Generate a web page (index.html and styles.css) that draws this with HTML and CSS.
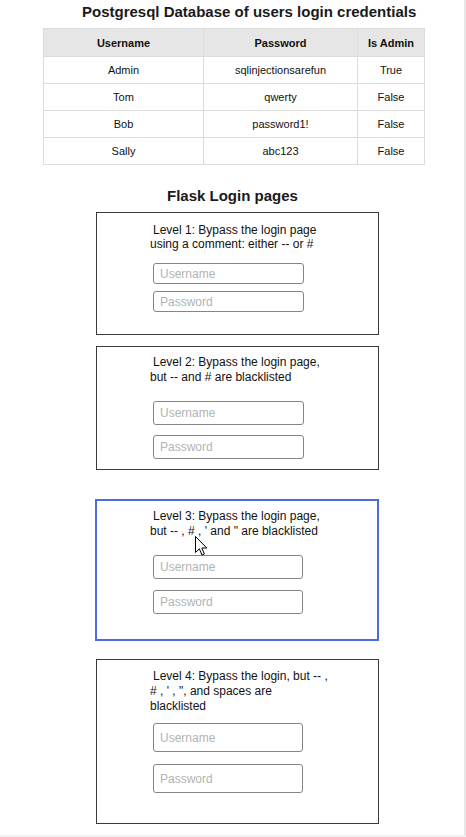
FILE: index.html
```
<!DOCTYPE html>
<html>
<head>
<meta charset="utf-8">
<title>SQL injection levels</title>
<link rel="stylesheet" href="styles.css">
</head>
<body>
<div class="page">
  <h1 class="title">Postgresql Database of users login credentials</h1>
  <table class="creds">
    <thead>
      <tr><th class="c-user">Username</th><th class="c-pass">Password</th><th class="c-admin">Is Admin</th></tr>
    </thead>
    <tbody>
      <tr><td>Admin</td><td>sqlinjectionsarefun</td><td>True</td></tr>
      <tr><td>Tom</td><td>qwerty</td><td>False</td></tr>
      <tr><td>Bob</td><td>password1!</td><td>False</td></tr>
      <tr><td>Sally</td><td>abc123</td><td>False</td></tr>
    </tbody>
  </table>

  <h2 class="subtitle">Flask Login pages</h2>

  <div class="levels">
    <div class="level level-1">
      <p class="prompt">Level 1: Bypass the login page<br>using a comment: either -- or #</p>
      <div class="fields">
        <input class="field" type="text" placeholder="Username">
        <input class="field" type="password" placeholder="Password">
      </div>
    </div>

    <div class="level level-2">
      <p class="prompt">Level 2: Bypass the login page,<br>but -- and # are blacklisted</p>
      <div class="fields">
        <input class="field" type="text" placeholder="Username">
        <input class="field" type="password" placeholder="Password">
      </div>
    </div>

    <div class="level level-3">
      <p class="prompt">Level 3: Bypass the login page,<br>but -- , # , ' and " are blacklisted</p>
      <div class="fields">
        <input class="field" type="text" placeholder="Username">
        <input class="field" type="password" placeholder="Password">
      </div>
      <svg class="cursor" width="13" height="20" viewBox="0 0 13 20">
        <path d="M0.5 0.5 L0.5 16.5 L4.3 12.8 L7 19 L9.4 18 L6.8 12 L11.8 12 Z" fill="#fff" stroke="#000" stroke-width="1" stroke-linejoin="miter"/>
      </svg>
    </div>

    <div class="level level-4">
      <p class="prompt">Level 4: Bypass the login, but -- ,<br># , ' , ", and spaces are<br>blacklisted</p>
      <div class="fields">
        <input class="field" type="text" placeholder="Username">
        <input class="field" type="password" placeholder="Password">
      </div>
    </div>
  </div>
</div>
</body>
</html>
```
FILE: styles.css
```
html {
  background: #f0f0f0;
}
body {
  margin: 0;
  font-family: "Liberation Sans", Arial, sans-serif;
  color: #111;
}
.page {
  width: 464px;
  height: 835px;
  background: #fff;
  border-right: 2px solid #e6e6e6;
  box-sizing: content-box;
  overflow: hidden;
}
.title {
  margin: 0;
  padding: 3px 0 0 82px;
  font-size: 15px;
  line-height: 18px;
  font-weight: bold;
  color: #1a1a1a;
}
.creds {
  margin: 7px 0 0 43px;
  border-collapse: collapse;
  font-size: 11px;
  color: #111;
}
.creds th,
.creds td {
  border: 1px solid #dcdcdc;
  text-align: center;
  padding: 0;
}
.creds th {
  background: #e6e6e6;
  height: 27px;
  font-weight: bold;
}
.creds td {
  height: 26px;
}
.c-user { width: 159px; }
.c-pass { width: 153px; }
.c-admin { width: 66px; }

.subtitle {
  margin: 22px 0 0 0;
  padding-left: 167px;
  font-size: 15px;
  line-height: 18px;
  font-weight: bold;
  color: #1a1a1a;
}
.levels {
  display: flex;
  flex-direction: column;
  padding-left: 96px;
  margin-top: 7px;
}
.level {
  position: relative;
  box-sizing: border-box;
  width: 283px;
  border: 1px solid #3a3a3a;
  padding-left: 53px;
  display: flex;
  flex-direction: column;
}
.prompt {
  margin: 0;
  font-size: 12px;
  line-height: 15px;
  text-indent: 3px;
  color: #111;
}
.fields {
  display: flex;
  flex-direction: column;
  padding-left: 3px;
}
.field {
  box-sizing: border-box;
  width: 151px;
  margin: 0;
  padding: 0 0 0 6px;
  border: 1px solid #858585;
  border-radius: 3px;
  font-family: "Liberation Sans", Arial, sans-serif;
  font-size: 12px;
  background: #fff;
  outline: none;
}
.field::placeholder {
  color: #b3b3b3;
}

.level-1 {
  height: 123px;
  padding-top: 10px;
}
.level-1 .prompt { line-height: 14px; }
.level-1 .fields { margin-top: 12px; gap: 7px; }
.level-1 .field { height: 21px; }

.level-2 {
  height: 124px;
  margin-top: 11px;
  padding-top: 8px;
}
.level-2 .fields { margin-top: 16px; gap: 10px; }
.level-2 .field { height: 24px; }

.level-3 {
  height: 142px;
  width: 284px;
  margin-top: 29px;
  margin-left: -1px;
  border: 2px solid #4a6fdc;
  padding-top: 8px;
}
.level-3 .fields { margin-top: 16px; gap: 11px; }
.level-3 .field { height: 24px; width: 150px; }

.level-4 {
  height: 165px;
  margin-top: 18px;
  padding-top: 9px;
}
.level-4 .fields { margin-top: 9px; gap: 12px; }
.level-4 .field { height: 29px; width: 150px; }

.cursor {
  position: absolute;
  left: 98px;
  top: 35px;
}
```
